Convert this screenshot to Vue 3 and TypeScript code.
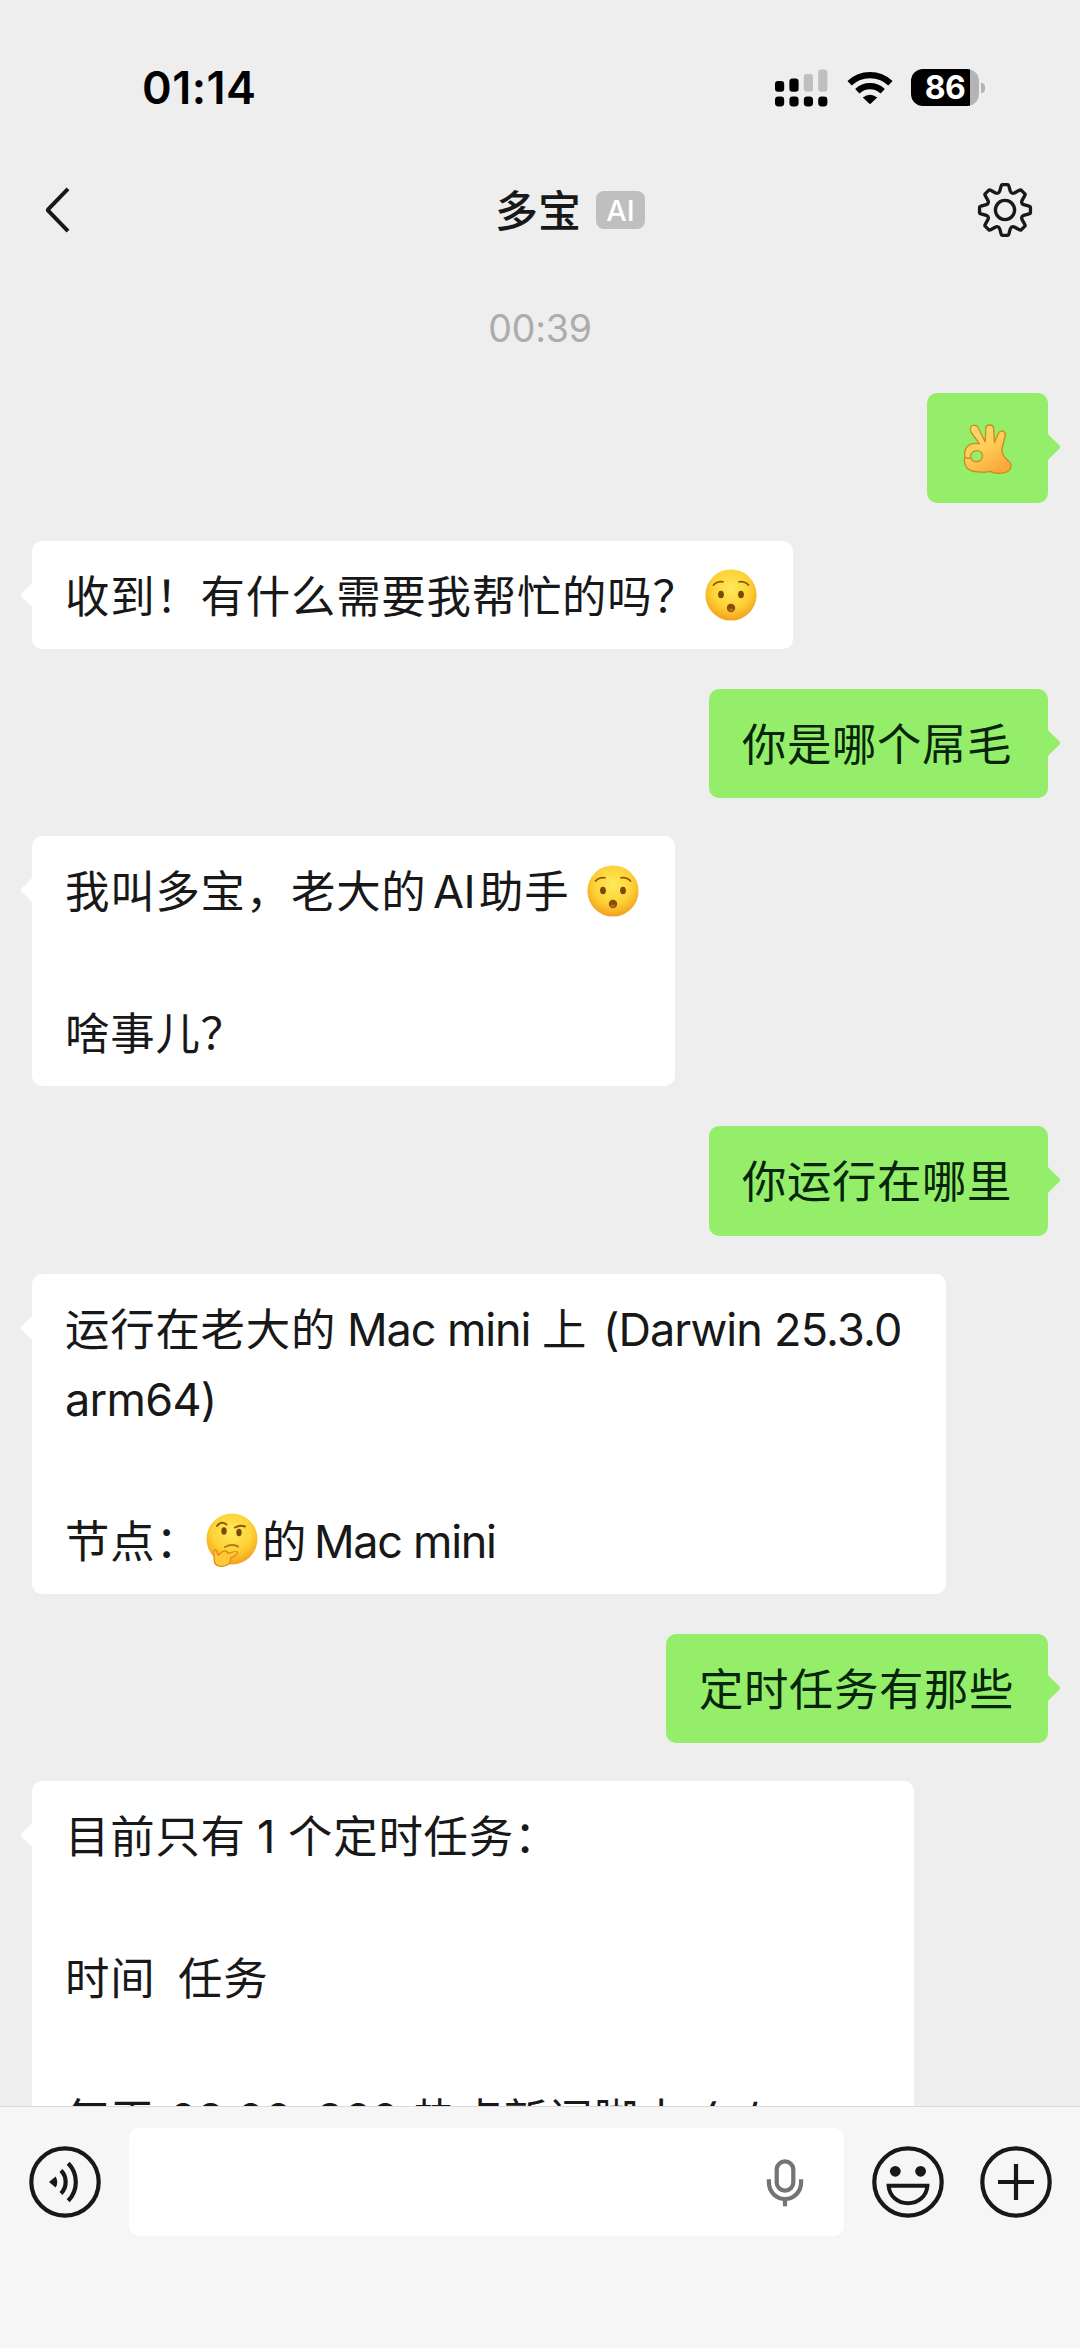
<script setup lang="ts">
type Segment = { kind: 'text' | 'latin' | 'gasp' | 'think' | 'ok'; text?: string; width?: number; track?: number }
type Message = { id: string; side: 'me' | 'bot'; width: number; lines: Segment[][] }

const zh = (text: string, width?: number): Segment => ({ kind: 'text', text, width })
const en = (text: string, width: number, track = 0): Segment => ({ kind: 'latin', text, width, track })

const messages: Message[] = [
  { id: 'm1', side: 'me', width: 121, lines: [[{ kind: 'ok' }]] },
  { id: 'm2', side: 'bot', width: 761, lines: [[zh('收到！有什么需要我帮忙的吗？', 640), { kind: 'gasp' }]] },
  { id: 'm3', side: 'me', width: 339, lines: [[zh('你是哪个屌毛')]] },
  {
    id: 'm4', side: 'bot', width: 643,
    lines: [
      [zh('我叫多宝，老大的', 368), en('AI', 46, -0.5), zh('助手', 108), { kind: 'gasp' }],
      [],
      [zh('啥事儿？')],
    ],
  },
  { id: 'm5', side: 'me', width: 339, lines: [[zh('你运行在哪里')]] },
  {
    id: 'm6', side: 'bot', width: 914,
    lines: [
      [zh('运行在老大的', 282), en('Mac mini', 195, -1.1), zh('上', 61), en('(Darwin', 171, -1), en('25.3.0', 130, -0.8)],
      [en('arm64)', 200, -0.7)],
      [],
      [zh('节点：', 141), { kind: 'think' }, zh('的', 52), en('Mac mini', 195, -1.3)],
    ],
  },
  { id: 'm7', side: 'me', width: 382, lines: [[zh('定时任务有那些')]] },
  {
    id: 'm8', side: 'bot', width: 882,
    lines: [
      [zh('目前只有', 192), en('1', 31), zh('个定时任务：')],
      [],
      [zh('时间', 113), zh('任务')],
      [],
      [zh('每天', 104), en('08:00', 147, -0.6), en('360', 97, -0.4), zh('热点新闻脚本', 289), en('(s/', 80)],
    ],
  },
]

// Cog outline: eight tapered teeth joined by rounded valleys around (28, 28).
const cogPath = (() => {
  const at = (angle: number, radius: number): string => {
    const a = (angle * Math.PI) / 180
    return `${(28 + radius * Math.cos(a)).toFixed(2)} ${(28 + radius * Math.sin(a)).toFixed(2)}`
  }
  let d = ''
  for (let i = 0; i < 8; i++) {
    const base = i * 45 - 90
    d += `${i ? 'L' : 'M'}${at(base - 16, 19.4)}L${at(base - 9, 24.4)}Q${at(base - 8, 25.6)} ${at(base - 6, 25.6)}`
    d += `L${at(base + 6, 25.6)}Q${at(base + 8, 25.6)} ${at(base + 9, 24.4)}L${at(base + 16, 19.4)}`
    d += `Q${at(base + 22.5, 17.2)} ${at(base + 29, 19.4)}`
  }
  return d + 'Z'
})()
</script>

<template>
  <div class="screen">
    <header class="status">
      <span class="clock">01:14</span>
      <div class="indicators">
        <svg class="signal" width="53" height="38" viewBox="0 0 53 38">
          <g fill="#000">
            <rect x="0" y="12" width="9.2" height="10.8" rx="3" />
            <rect x="14.4" y="9.4" width="9.2" height="13.4" rx="3" />
            <rect x="0" y="27.6" width="9.2" height="9.8" rx="3.4" />
            <rect x="14.4" y="27.6" width="9.2" height="9.8" rx="3.4" />
            <rect x="28.8" y="27.6" width="9.2" height="9.8" rx="3.4" />
            <rect x="43.2" y="27.6" width="9.2" height="9.8" rx="3.4" />
          </g>
          <g fill="#bfbfbf">
            <rect x="28.8" y="5" width="9.2" height="17.8" rx="3" />
            <rect x="43.2" y="0.6" width="9.2" height="22.2" rx="3" />
          </g>
        </svg>
        <svg class="wifi" width="46" height="34" viewBox="0 0 46 34">
          <g fill="none" stroke="#000" stroke-width="6.2">
            <path d="M2.6 12.3A29.5 29.5 0 0 1 43.4 12.3" />
            <path d="M10.3 20.3A18.4 18.4 0 0 1 35.7 20.3" />
          </g>
          <path d="M15.8 26.4Q23 20.9 30.2 26.4L23.9 32.6Q23 33.4 22.1 32.6Z" fill="#000" />
        </svg>
        <div class="battery">
          <div class="cell"><span>86</span></div>
          <i class="cap"></i>
        </div>
      </div>
    </header>

    <nav class="nav">
      <svg class="back" width="28" height="50" viewBox="0 0 28 50">
        <path d="M25 3.8L5.4 24Q4.5 25 5.4 26L25 46.2" fill="none" stroke="#181818" stroke-width="4" />
      </svg>
      <div class="title">
        <h1>多宝</h1>
        <span class="tag">AI</span>
      </div>
      <svg class="cog" width="56" height="56" viewBox="0 0 56 56">
        <g fill="none" stroke="#181818" stroke-width="3.3" stroke-linejoin="round">
          <path :d="cogPath" />
          <circle cx="28" cy="28" r="9.6" />
        </g>
      </svg>
    </nav>

    <main class="thread">
      <time class="stamp">00:39</time>
      <div v-for="m in messages" :key="m.id" class="row" :class="m.side">
        <div class="bubble" :style="{ width: m.width + 'px' }">
          <svg class="tip" width="15" height="30" viewBox="0 0 15 30">
            <path d="M0 0Q1 2.2 2.6 3.8L12.6 13.5Q14 15 12.6 16.5L2.6 26.2Q1 27.8 0 30Z" />
          </svg>
          <div v-for="(line, li) in m.lines" :key="li" class="line">
            <template v-for="(s, si) in line" :key="si">
              <svg v-if="s.kind === 'gasp'" class="emoji" width="52" height="52" viewBox="0 0 52 52">
                <defs>
                  <radialGradient id="face" cx="50%" cy="38%" r="62%">
                    <stop offset="0" stop-color="#ffe95c" />
                    <stop offset="0.6" stop-color="#fdd236" />
                    <stop offset="1" stop-color="#f3a01c" />
                  </radialGradient>
                </defs>
                <circle cx="26" cy="26" r="25.6" fill="url(#face)" />
                <path d="M8.5 16Q12 12.2 18 12.8M34 12.8Q40 12.2 43.5 16" fill="none" stroke="#8a5a0c" stroke-width="1.8" stroke-linecap="round" />
                <ellipse cx="16" cy="25.5" rx="2.9" ry="3.8" fill="#7a4a0c" />
                <ellipse cx="36" cy="25.5" rx="2.9" ry="3.8" fill="#7a4a0c" />
                <ellipse cx="26" cy="39" rx="4.2" ry="4.2" fill="#8a4a10" />
                <ellipse cx="26" cy="41" rx="2.6" ry="1.8" fill="#b5651c" />
              </svg>
              <svg v-else-if="s.kind === 'think'" class="emoji think" width="52" height="54" viewBox="0 0 52 54">
                <defs>
                  <radialGradient id="ponder" cx="50%" cy="35%" r="65%">
                    <stop offset="0" stop-color="#ffe95c" />
                    <stop offset="0.6" stop-color="#fdd236" />
                    <stop offset="1" stop-color="#f3a01c" />
                  </radialGradient>
                </defs>
                <circle cx="26" cy="26" r="25.5" fill="url(#ponder)" />
                <path d="M11 13Q15 7.5 20.5 11.5" fill="none" stroke="#8a5a0c" stroke-width="2" stroke-linecap="round" />
                <path d="M29 14.5Q34 11.5 39 13.5" fill="none" stroke="#8a5a0c" stroke-width="2" stroke-linecap="round" />
                <ellipse cx="18" cy="18" rx="2.7" ry="3.7" fill="#7a4a0c" />
                <ellipse cx="33" cy="19.5" rx="2.7" ry="3.7" fill="#7a4a0c" />
                <path d="M19 34Q25 30.5 32 33.5" fill="none" stroke="#b87a1a" stroke-width="2" stroke-linecap="round" />
                <path d="M8.5 37C7 38 8 45 8.5 49C9.5 53 15 54.5 20 52.5C24 51 25 48 24.5 45C29 43 32 41 31.5 39C31 37.5 27 38.8 21.5 40.5C22 38 19.5 37.5 17 38.5C14 40 13 42 12 42C11 40 10.5 36 8.5 37Z" fill="#ffc83a" stroke="#e08a16" stroke-width="1.3" stroke-linejoin="round" />
              </svg>
              <svg v-else-if="s.kind === 'ok'" class="emoji ok" width="50" height="52" viewBox="0 0 50 52">
                <defs>
                  <linearGradient id="hand" x1="0" y1="0" x2="0.6" y2="1">
                    <stop offset="0" stop-color="#ffd97a" />
                    <stop offset="0.55" stop-color="#ffcc56" />
                    <stop offset="1" stop-color="#f9a93a" />
                  </linearGradient>
                </defs>
                <path fill-rule="evenodd" fill="url(#hand)" stroke="#c98a1e" stroke-width="1.3" stroke-linejoin="round" d="M7.4 6C7 1.8 13 1 15 4.5L22.3 19L22.8 5.5C23 .8 30.4 .8 30.6 5.5L31.5 19.5L35.3 10.5C37 6.500 43 7.8 42.3 12.5L38.8 26.5C39 31 41.5 35 46 38.5C48.8 40.5 48.8 44 46.5 46.8C43 51 33.5 51.5 27 48.3C20 49.8 9 49.5 4.5 45.5C1.5 42.5 .8 37.5 2 34C.6 29 2.5 23.5 7 21.7C10 20.4 13.5 20.2 16.5 20.8L8.3 9.5Q7.5 8 7.4 6ZM13.8 27.6C10 27.6 7.3 30.3 7.5 33.6C7.7 37 10.5 38.8 13.8 38.6C17.2 38.4 19.6 35.9 19.5 32.8C19.4 29.8 17 27.6 13.8 27.6Z" />
                <path d="M2 34Q4.5 36.5 7.6 34.5" fill="none" stroke="#c98a1e" stroke-width="1.2" />
              </svg>
              <span
                v-else
                :class="s.kind"
                :style="{ width: s.width ? s.width + 'px' : undefined, letterSpacing: s.track ? s.track + 'px' : undefined }"
              >{{ s.text }}</span>
            </template>
          </div>
        </div>
      </div>
    </main>

    <footer class="composer">
      <svg class="voice" width="72" height="72" viewBox="0 0 72 72">
        <g fill="none" stroke="#181818" stroke-width="4.2">
          <circle cx="36" cy="36" r="33.7" />
          <path d="M32 24.5A16.5 16.5 0 0 1 32 47.5" />
          <path d="M39.2 17.2A27 27 0 0 1 39.2 54.8" />
        </g>
        <path d="M20 36L26.6 30.4Q30 36 26.6 41.6Z" fill="#181818" />
      </svg>
      <div class="field">
        <svg width="38" height="50" viewBox="0 0 38 50">
          <g fill="none" stroke="#747474" stroke-width="4.2">
            <rect x="10.7" y="3.3" width="16.6" height="29.4" rx="8.3" />
            <path d="M2.9 21.2V24.5A16.1 16.5 0 0 0 35.1 24.5V21.2" />
            <path d="M19 41V48.3" />
          </g>
        </svg>
      </div>
      <svg class="smile" width="72" height="72" viewBox="0 0 72 72">
        <circle cx="36" cy="36" r="33.7" fill="none" stroke="#181818" stroke-width="4.2" />
        <circle cx="23.3" cy="25.3" r="5.4" fill="#181818" />
        <circle cx="48.6" cy="25.3" r="5.4" fill="#181818" />
        <path d="M16.6 39.8H55.4C54.5 50.5 46 57.2 36 57.2S17.5 50.5 16.6 39.8Z" fill="none" stroke="#181818" stroke-width="4" />
      </svg>
      <svg class="plus" width="72" height="72" viewBox="0 0 72 72">
        <g fill="none" stroke="#181818" stroke-width="4.2">
          <circle cx="36" cy="36" r="33.7" />
          <path d="M36 18V54M18 36H54" />
        </g>
      </svg>
    </footer>
  </div>
</template>

<style>
body {
  margin: 0;
  background: #eee;
}
</style>

<style scoped>
.screen {
  display: flex;
  flex-direction: column;
  width: 1080px;
  height: 2348px;
  overflow: hidden;
  background: #eee;
  color: #181818;
  font-family: Inter, 'Noto Sans CJK SC', sans-serif;
}

.status {
  display: flex;
  flex: none;
  align-items: center;
  justify-content: space-between;
  box-sizing: border-box;
  height: 175px;
  padding: 0 95px 0 142px;
}

.clock {
  color: #000;
  font-size: 45px;
  font-weight: 600;
  line-height: 60px;
  letter-spacing: 0.5px;
}

.indicators {
  display: flex;
  align-items: center;
}

.wifi {
  margin-left: 19px;
}

.battery {
  display: flex;
  align-items: center;
  margin-left: 18px;
}

.cell {
  display: flex;
  align-items: center;
  justify-content: center;
  box-sizing: border-box;
  width: 68px;
  height: 37px;
  border-radius: 12px;
  background: linear-gradient(to right, #000 59px, #b4b4b4 59px);
  color: #fff;
  font-size: 32px;
  font-weight: 700;
  line-height: 37px;
  letter-spacing: -0.5px;
}

.cap {
  width: 4px;
  height: 10px;
  margin-left: 2px;
  border-radius: 0 4px 4px 0;
  background: #b4b4b4;
}

.nav {
  display: flex;
  flex: none;
  align-items: center;
  justify-content: space-between;
  height: 70px;
  padding: 0 47px 0 43px;
}

.title {
  display: flex;
  align-items: center;
  margin-left: 92px;
}

.title h1 {
  margin: 0;
  padding-top: 2px;
  font-size: 43px;
  font-weight: 500;
  line-height: 60px;
}

.tag {
  box-sizing: border-box;
  width: 49px;
  height: 38px;
  margin-left: 15px;
  border-radius: 8px;
  background: #bfbfbf;
  color: #fff;
  font-size: 29px;
  font-weight: 500;
  line-height: 40px;
  text-align: center;
}

.thread {
  display: flex;
  flex: 1;
  flex-direction: column;
  min-height: 0;
  overflow: hidden;
}

.stamp {
  flex: none;
  height: 148px;
  color: #acacac;
  font-size: 37.5px;
  line-height: 168px;
  letter-spacing: -0.2px;
  text-align: center;
}

.row {
  display: flex;
  flex: none;
}

.row.me {
  justify-content: flex-end;
  margin-bottom: 38px;
  padding-right: 32px;
}

.row.bot {
  margin-bottom: 39.5px;
  padding-left: 32px;
}

.bubble {
  position: relative;
  box-sizing: border-box;
  padding: 19px 33px;
  border-radius: 10px;
  background: #fff;
}

.me .bubble {
  padding: 19.5px 33px;
  background: #94ee6a;
  color: #06250a;
}

.tip {
  position: absolute;
  top: 39px;
  left: -13px;
  fill: #fff;
  transform: scaleX(-1);
}

.me .tip {
  right: -14px;
  left: auto;
  fill: #94ee6a;
  transform: none;
}

.line {
  display: flex;
  align-items: center;
  height: 70.66px;
  font-size: 45px;
  line-height: 70.66px;
  white-space: pre;
}

.line span {
  flex: none;
  padding-top: 4px;
}

.line .text {
  font-size: 44.4px;
  letter-spacing: 0.8px;
}

.me .line .text {
  letter-spacing: 0.6px;
}

.emoji {
  flex: none;
}

.emoji.ok {
  margin-top: 3px;
  margin-left: 3px;
}

.emoji.think {
  margin-right: 4px;
}

.composer {
  display: flex;
  flex: none;
  align-items: flex-start;
  box-sizing: border-box;
  height: 242px;
  padding: 21px 28.5px 0;
  border-top: 1px solid #dadada;
  background: #f6f6f6;
}

.composer > svg {
  margin-top: 18px;
}

.field {
  display: flex;
  align-items: center;
  justify-content: flex-end;
  box-sizing: border-box;
  width: 715px;
  height: 108px;
  margin: 0 28px 0 28.5px;
  padding: 2px 40.5px 0 0;
  border-radius: 10px;
  background: #fff;
}

.composer > .plus {
  margin-left: 35.5px;
}
</style>
